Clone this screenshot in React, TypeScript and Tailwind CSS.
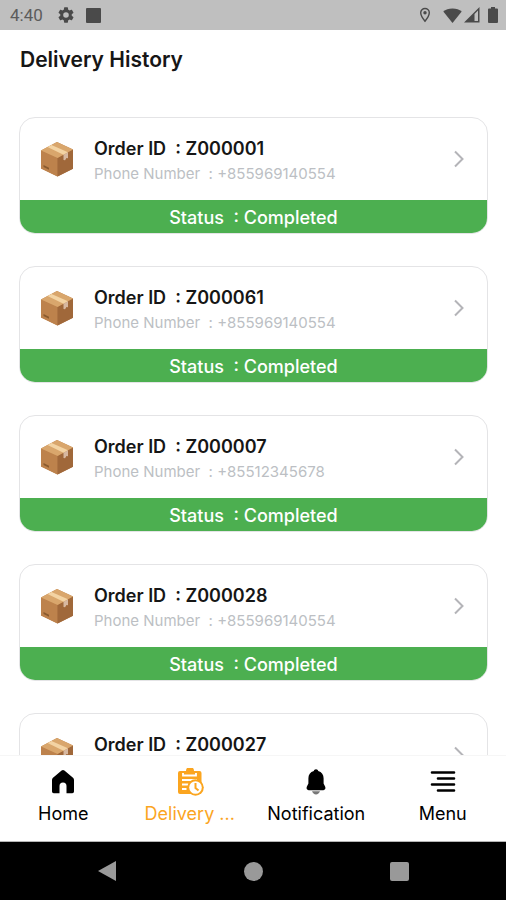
import React from "react";

type Order = { id: string; phone: string };

const orders: Order[] = [
  { id: "Z000001", phone: "+855969140554" },
  { id: "Z000061", phone: "+855969140554" },
  { id: "Z000007", phone: "+85512345678" },
  { id: "Z000028", phone: "+855969140554" },
  { id: "Z000027", phone: "+855969140554" },
];

function StatusBar() {
  return (
    <header className="flex h-[30px] shrink-0 items-center justify-between bg-[#bfbfbf] pr-2 pl-[10px] text-[#4a4a4a]">
      <div className="flex items-center">
        <span className="w-12 font-[Roboto,sans-serif] text-[17px] leading-5 text-[#5c5c5c]">4:40</span>
        <svg width="16" height="16" viewBox="2 2 20 20" fill="currentColor" aria-hidden="true">
          <path
            fillRule="evenodd"
            d="M19.14 12.94c.04-.3.06-.61.06-.94s-.02-.64-.07-.94l2.03-1.58a.49.49 0 0 0 .12-.61l-1.92-3.32a.49.49 0 0 0-.59-.22l-2.39.96a7 7 0 0 0-1.62-.94l-.36-2.54a.48.48 0 0 0-.48-.41h-3.84a.47.47 0 0 0-.47.41l-.36 2.54c-.59.24-1.13.57-1.62.94l-2.39-.96a.48.48 0 0 0-.59.22L2.74 8.87a.48.48 0 0 0 .12.61l2.03 1.58a6 6 0 0 0-.02 1.88l-2.03 1.58a.49.49 0 0 0-.12.61l1.92 3.32c.12.22.37.29.59.22l2.39-.96c.5.38 1.03.7 1.62.94l.36 2.54c.05.24.24.41.48.41h3.84c.24 0 .44-.17.47-.41l.36-2.54a7 7 0 0 0 1.62-.94l2.39.96c.22.08.47 0 .59-.22l1.92-3.32a.47.47 0 0 0-.12-.61zM12 15.500a3.500 3.500 0 1 1 0-7 3.500 3.500 0 0 1 0 7z"
          />
        </svg>
        <span className="ml-3 size-[15px] rounded-[1px] bg-[#4a4a4a]" />
      </div>
      <div className="flex items-center">
        <svg width="12" height="16" viewBox="0 0 12 16" aria-hidden="true">
          <path d="M6 1.5a4.3 4.3 0 0 0-4.3 4.3C1.700 9 6 14.200 6 14.200S10.300 9 10.300 5.800A4.300 4.300 0 0 0 6 1.500z" fill="none" stroke="currentColor" strokeWidth="1.400" />
          <circle cx="6" cy="5.800" r="1.700" fill="currentColor" />
        </svg>
        <svg className="ml-3" width="19" height="15" viewBox="0 0 19 15" fill="currentColor" aria-hidden="true">
          <path d="M9.500 15 .3 3.500C2.500 1.600 5.700.4 9.500.4s7 1.200 9.200 3.100z" />
        </svg>
        <svg className="ml-[2px]" width="16" height="16" viewBox="0 0 16 16" fill="currentColor" aria-hidden="true">
          <path fillRule="evenodd" d="M0 15.500 15.500 0v15.500zM10.500 7v7h3.500V3.500z" />
        </svg>
        <svg className="ml-2" width="10" height="16" viewBox="0 0 10 16" fill="currentColor" aria-hidden="true">
          <path d="M3 0h4v1.500h2a1 1 0 0 1 1 1V15a1 1 0 0 1-1 1H1a1 1 0 0 1-1-1V2.500a1 1 0 0 1 1-1h2z" />
        </svg>
      </div>
    </header>
  );
}

function Parcel() {
  return (
    <svg className="shrink-0" width="34" height="36" viewBox="0 0 34 36" aria-hidden="true">
      <path d="M17 1 33 8.500v19.300L17.500 35.500 1 27.500V9.500z" fill="#b87d48" />
      <path d="M1 9.500 17.500 17v18.500L1 27.500z" fill="#bd824c" />
      <path d="M17.500 17 33 8.500v19.300l-15.500 7.700z" fill="#a0683a" />
      <path d="M1 9.500 17 1l16 7.500L17.500 17z" fill="#d9a66c" />
      <path d="M7.500 6 11.500 4 28 11.200l-4.500 2.600z" fill="#f3d3a3" />
      <path d="M23.500 13.800 28 11.200v6l-1.600-.2-1.300 2.200-1.600-.3z" fill="#d7b8a0" />
      <path d="m3.500 24 5.500 2.700v2L3.500 26z" fill="#8a5a2e" />
    </svg>
  );
}

function OrderCard({ order }: { order: Order }) {
  return (
    <li>
      <button type="button" className="block w-full overflow-hidden rounded-2xl border border-[#e4e4e6] bg-white text-left">
        <span className="flex h-[82px] items-center pr-[22px] pl-5">
          <Parcel />
          <span className="ml-5 flex flex-1 flex-col pt-1 whitespace-pre">
            <span className="text-[18px] leading-[26px] font-semibold text-[#161616]">{`Order ID  : ${order.id}`}</span>
            <span className="text-[15px] leading-6 text-[#bcbfc4]">{`Phone Number  : ${order.phone}`}</span>
          </span>
          <svg width="12" height="18" viewBox="0 0 12 18" fill="none" stroke="#b4b4b8" strokeWidth="2" aria-hidden="true">
            <path d="m2 1.500 7.500 7.500L2 16.500" />
          </svg>
        </span>
        <span className="block bg-[#4caf50] pt-[2px] text-center text-[18px] leading-[31px] font-medium whitespace-pre text-white">
          {"Status  : Completed"}
        </span>
      </button>
    </li>
  );
}

function HomeIcon() {
  return (
    <svg width="28" height="28" viewBox="0 0 28 28" aria-hidden="true">
      <path d="M12.600 2.600a2.200 2.200 0 0 1 2.800 0l8.600 7.200a2.800 2.800 0 0 1 1 2.200v11.500a1.700 1.700 0 0 1-1.700 1.700h-5.800V18a3.500 3.500 0 0 0-7 0v7.200H4.700A1.700 1.700 0 0 1 3 23.500V12a2.800 2.800 0 0 1 1-2.200z" fill="currentColor" />
    </svg>
  );
}

function HistoryIcon() {
  return (
    <svg width="28" height="28" viewBox="0 0 28 28" aria-hidden="true">
      <path d="M4 3h6a4 4 0 0 1 8 0h5.500a2 2 0 0 1 2 2v19a2 2 0 0 1-2 2H4a2 2 0 0 1-2-2V5a2 2 0 0 1 2-2z" fill="currentColor" />
      <path d="M7 5v2.500h13V5" fill="none" stroke="#fff" strokeWidth="1.800" />
      <path d="M6 12h15M6 16.500h6.500M6 21h4.500" stroke="#fff" strokeWidth="2" />
      <circle cx="19.500" cy="19.500" r="8.300" fill="currentColor" />
      <circle cx="19.500" cy="19.500" r="6.300" fill="#fff" />
      <path d="M19.500 15v5l3 2.500" fill="none" stroke="currentColor" strokeWidth="2" />
    </svg>
  );
}

function BellIcon() {
  return (
    <svg width="28" height="28" viewBox="0 0 28 28" aria-hidden="true">
      <path d="M14 1.200c1.200 0 2 .7 2.200 1.800 3.600 1 5.400 3.900 5.400 7.300v5.200l1.600 3.300c.7 1.700-.1 3.400-1.800 3.400H6.600c-1.700 0-2.500-1.700-1.800-3.400l1.600-3.300v-5.200c0-3.400 1.800-6.300 5.400-7.300.2-1.100 1-1.800 2.200-1.800z" fill="currentColor" />
      <path d="M10 23.200h8c-.7 2-2.200 3.200-4 3.200s-3.300-1.200-4-3.200z" fill="#777" />
    </svg>
  );
}

function MenuIcon() {
  return (
    <svg width="28" height="28" viewBox="0 0 28 28" fill="none" stroke="currentColor" strokeWidth="2.600" strokeLinecap="round" aria-hidden="true">
      <path d="M3 4.500h22M9 10.500h16M3 16.500h22M9 22.500h16" />
    </svg>
  );
}

const tabs = [
  { label: "Home", icon: <HomeIcon />, active: false },
  { label: "Delivery ...", icon: <HistoryIcon />, active: true },
  { label: "Notification", icon: <BellIcon />, active: false },
  { label: "Menu", icon: <MenuIcon />, active: false },
];

export default function App() {
  return (
    <div className="flex h-screen flex-col overflow-hidden bg-white font-[Inter,sans-serif]">
      <StatusBar />
      <h1 className="shrink-0 px-5 pt-4 text-[21px] leading-7 font-semibold text-[#161616]">Delivery History</h1>
      <main className="mt-[11px] min-h-0 flex-1 overflow-y-auto pr-[18px] pl-[19px] pt-8 [scrollbar-width:none]">
        <ul className="flex flex-col gap-8 pb-8">
          {orders.map((order) => (
            <OrderCard key={order.id} order={order} />
          ))}
        </ul>
      </main>
      <nav aria-label="Main" className="grid h-[87px] shrink-0 grid-cols-4 border-t border-[#f6f6f6] border-b border-b-[#b5b5b5] bg-white">
        {tabs.map((tab) => (
          <button
            key={tab.label}
            type="button"
            className={
              tab.active
                ? "flex flex-col items-center gap-1 pt-3 text-[#fba51f]"
                : "flex flex-col items-center gap-1 pt-3 text-black"
            }
          >
            {tab.icon}
            <span className="text-[18px] leading-7">{tab.label}</span>
          </button>
        ))}
      </nav>
      <footer className="flex h-[58px] shrink-0 items-center justify-center bg-black text-[#999]">
        <button type="button" aria-label="Back" className="flex w-[146px] justify-center">
          <svg width="20" height="22" viewBox="0 0 20 22" fill="currentColor" aria-hidden="true">
            <path d="M19 1v20L1 11z" />
          </svg>
        </button>
        <button type="button" aria-label="Home screen" className="flex w-[146px] justify-center">
          <span className="size-[19px] rounded-full bg-[#999]" />
        </button>
        <button type="button" aria-label="Recent apps" className="flex w-[146px] justify-center">
          <span className="size-[19px] rounded-[2px] bg-[#999]" />
        </button>
      </footer>
    </div>
  );
}
